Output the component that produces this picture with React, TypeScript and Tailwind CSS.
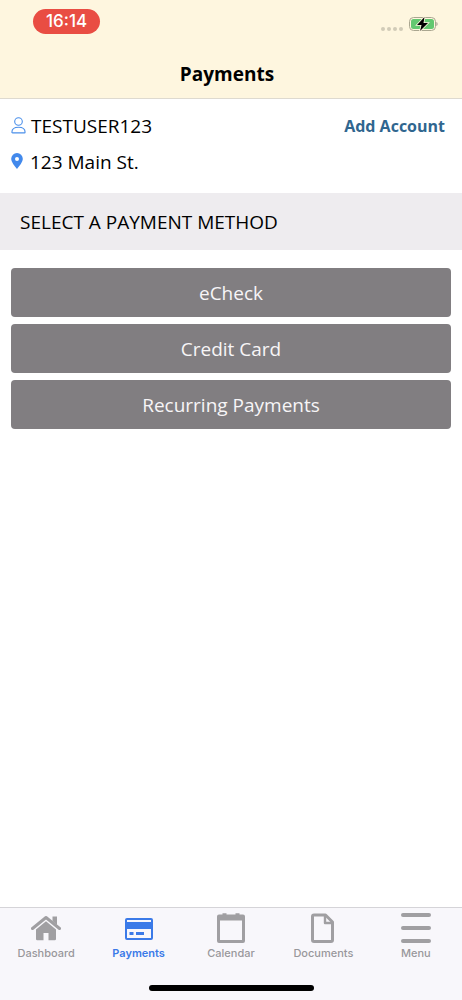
import { ReactNode } from 'react'
import clsx from 'clsx'

interface TabProps {
  label: string,
  icon: ReactNode,
  active?: boolean
}

const paymentMethods = ['eCheck', 'Credit Card', 'Recurring Payments']

function BatteryIcon() {
  return (
    <svg width="29" height="16" viewBox="0 0 29 16" aria-hidden="true">
      <rect x="0.5" y="1.5" width="26" height="13" rx="4" fill="none" stroke="#aaa690" />
      <rect x="2" y="3" width="23" height="10" rx="2.5" fill="#63c870" />
      <path d="M27.5 6v4c1.300-.3 1.300-3.700 0-4z" fill="#8f8b7c" />
      <path d="M15.500 1 8 9h4.500L11 15l8-8h-4.500z" fill="#000" stroke="#fef6df" strokeWidth="1.600" paintOrder="stroke" />
    </svg>
  )
}

function UserIcon() {
  return (
    <svg width="16" height="18" viewBox="0 0 16 18" fill="none" stroke="#4a8fea" strokeWidth="1.100" aria-hidden="true">
      <circle cx="7.500" cy="4.500" r="3.800" />
      <path d="M.9 15.200c0-3.300 2.500-5 6.600-5s6.600 1.700 6.600 5c0 .4-.3.700-.7.700H1.600c-.4 0-.7-.3-.7-.7z" />
    </svg>
  )
}

function PinIcon() {
  return (
    <svg width="12" height="18" viewBox="0 0 12 18" aria-hidden="true">
      <path fillRule="evenodd" d="M6 0a5.800 5.800 0 0 0-5.800 5.800C.2 9 3.500 13 6 16c2.500-3 5.800-7 5.800-10.200A5.800 5.800 0 0 0 6 0zm0 4a2 2 0 1 1 0 4 2 2 0 0 1 0-4z" fill="#4289ec" />
    </svg>
  )
}

function HomeIcon() {
  return (
    <svg width="30" height="30" viewBox="0 0 30 30" fill="currentColor" aria-hidden="true">
      <path d="M21.500 3.500H26V12l-4.500-4z" />
      <path d="M1.500 15.500 15 4.500 28.500 15.500" fill="none" stroke="currentColor" strokeWidth="3" strokeLinecap="round" strokeLinejoin="round" />
      <path d="M15 8.300 25 16.500V26q0 1.300-1.300 1.300H17.500V20h-5v7.300H6.300Q5 27.300 5 26v-9.500z" />
    </svg>
  )
}

function CardIcon() {
  return (
    <svg width="30" height="30" viewBox="0 0 30 30" fill="currentColor" aria-hidden="true">
      <path fillRule="evenodd" d="M3 5h24a2 2 0 0 1 2 2v18a2 2 0 0 1-2 2H3a2 2 0 0 1-2-2V7a2 2 0 0 1 2-2zm0 2v2h24V7zm0 9v9h24v-9z" />
      <path d="M5.500 19h4v3h-4zM12 19h8v3h-8z" />
    </svg>
  )
}

function CalendarIcon() {
  return (
    <svg width="30" height="30" viewBox="0 0 30 30" fill="currentColor" aria-hidden="true">
      <path fillRule="evenodd" d="M3 1.500h3.500V.2h4v1.300h9V.2h4v1.300H27a2 2 0 0 1 2 2V28a2 2 0 0 1-2 2H3a2 2 0 0 1-2-2V3.500a2 2 0 0 1 2-2zM4 7.500V27h22V7.500z" />
    </svg>
  )
}

function DocumentIcon() {
  return (
    <svg width="30" height="30" viewBox="0 0 30 30" fill="none" stroke="currentColor" strokeWidth="3" strokeLinejoin="round" aria-hidden="true">
      <path d="M6 2h11.500L24.500 9v18a1.500 1.500 0 0 1-1.500 1.500H6A1.500 1.500 0 0 1 4.500 27V3.500A1.500 1.500 0 0 1 6 2z" />
      <path d="M17 2.500V10h7.500" strokeWidth="2.400" />
    </svg>
  )
}

function MenuIcon() {
  return (
    <svg width="30" height="30" viewBox="0 0 30 30" fill="currentColor" aria-hidden="true">
      <rect y="0" width="30" height="4" rx="2" />
      <rect y="13" width="30" height="4" rx="2" />
      <rect y="26" width="30" height="4" rx="2" />
    </svg>
  )
}

function Tab({ label, icon, active }: TabProps) {
  return (
    <button
      className={clsx('flex flex-col items-center gap-0.5', active ? 'text-[#3b7ae8] font-semibold' : 'text-[#98979b] font-medium')}
      aria-current={active ? 'page' : undefined}
    >
      <span className={active ? '' : 'text-[#a09fa2]'}>{icon}</span>
      <span className="text-[11px] leading-4">{label}</span>
    </button>
  )
}

export default function App() {
  return (
    <div className="flex flex-col min-h-screen bg-white text-black font-['Open_Sans',sans-serif]">
      <header className="bg-[#fef6df] border-b border-[#dedad0]">
        <div className="flex items-start justify-between pt-2 pl-8 pr-6">
          <span className="mt-px ml-px px-[13px] rounded-full bg-[#e94d43] text-white text-[17px] leading-[25px] font-medium font-['Inter',sans-serif]">16:14</span>
          <div className="flex items-center gap-1.5 pt-2">
            <div className="flex gap-0.5 pt-2.5">
              <span className="size-1 rounded-full bg-[#d1cbb8]" />
              <span className="size-1 rounded-full bg-[#d1cbb8]" />
              <span className="size-1 rounded-full bg-[#d1cbb8]" />
              <span className="size-1 rounded-full bg-[#d1cbb8]" />
            </div>
            <BatteryIcon />
          </div>
        </div>
        <h1 className="pt-7 pb-3 pr-2 text-center text-[19px] leading-6 font-bold">Payments</h1>
      </header>

      <main className="flex-1">
        <section className="flex flex-col gap-3 px-[11px] pt-[15px] pb-[19px] text-[19px] leading-6">
          <div className="flex items-center justify-between">
            <span className="flex items-center gap-1"><UserIcon />TESTUSER123</span>
            <a href="#add-account" className="pr-1.5 text-base leading-6 font-bold text-[#30668f]">Add Account</a>
          </div>
          <span className="flex items-center gap-[7px]"><PinIcon />123 Main St.</span>
        </section>

        <h2 className="bg-[#eeecef] px-5 pt-[17px] pb-[15px] text-[19px] leading-[25px]">SELECT A PAYMENT METHOD</h2>

        <div className="flex flex-col gap-[7px] px-[11px] pt-[18px]">
          {paymentMethods.map(method => (
            <button key={method} className="h-[49px] rounded bg-[#817e81] text-[19px] leading-6 text-[#f7f5f7]">{method}</button>
          ))}
        </div>
      </main>

      <footer className="bg-[#f8f7fb] border-t border-[#d5d4d8] font-['Inter',sans-serif]">
        <nav className="grid grid-cols-5 pt-[5px]">
          <Tab label="Dashboard" icon={<HomeIcon />} />
          <Tab label="Payments" icon={<CardIcon />} active />
          <Tab label="Calendar" icon={<CalendarIcon />} />
          <Tab label="Documents" icon={<DocumentIcon />} />
          <Tab label="Menu" icon={<MenuIcon />} />
        </nav>
        <div className="mx-auto mt-6 mb-[9px] h-[6px] w-[165px] rounded-full bg-black" />
      </footer>
    </div>
  )
}
